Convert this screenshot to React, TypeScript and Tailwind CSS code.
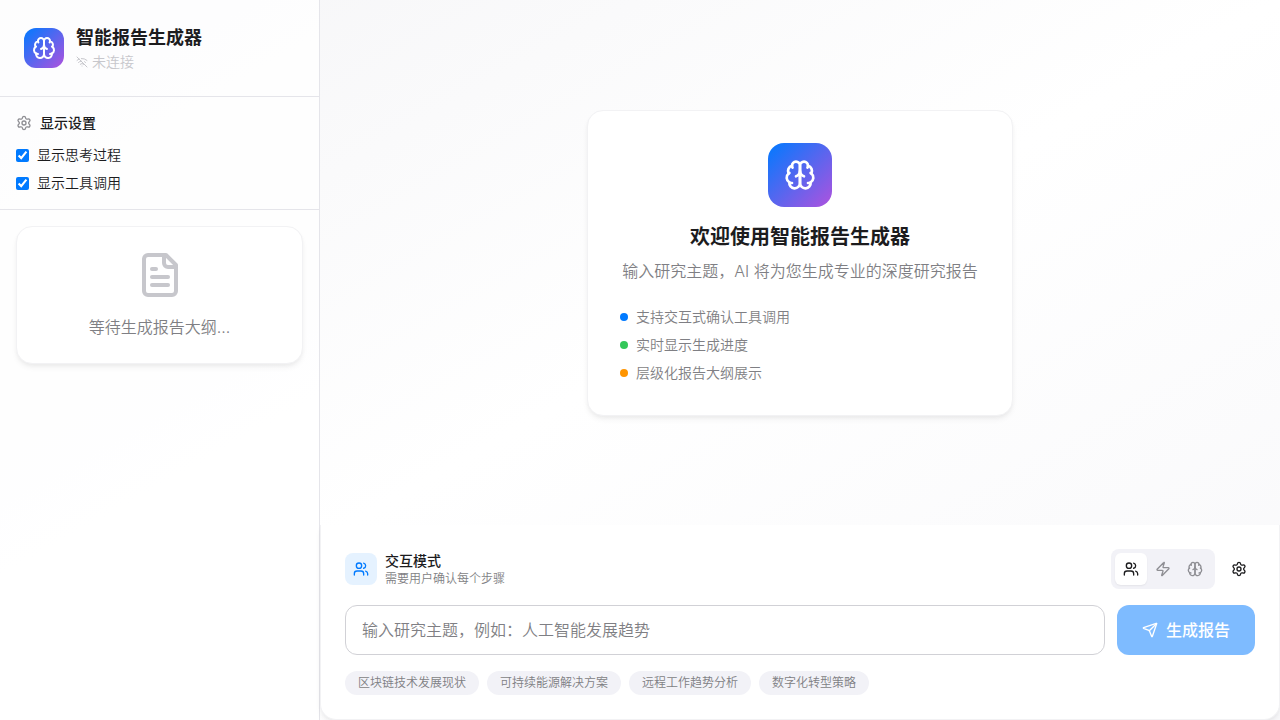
import { useState } from 'react';
import type { ReactNode } from 'react';
import { Send, Settings, Users, WifiOff, Zap } from 'lucide-react';

const features = [
  { dot: 'bg-[#007aff]', text: '支持交互式确认工具调用' },
  { dot: 'bg-[#34c759]', text: '实时显示生成进度' },
  { dot: 'bg-[#ff9500]', text: '层级化报告大纲展示' },
];

const examples = ['区块链技术发展现状', '可持续能源解决方案', '远程工作趋势分析', '数字化转型策略'];

type IconProps = { className?: string };

function Icon({ className, children }: IconProps & { children: ReactNode }) {
  return (
    <svg
      className={className}
      viewBox="0 0 24 24"
      fill="none"
      stroke="currentColor"
      strokeWidth="2"
      strokeLinecap="round"
      strokeLinejoin="round"
      aria-hidden="true"
    >
      {children}
    </svg>
  );
}

function Brain({ className }: IconProps) {
  return (
    <Icon className={className}>
      <path d="M12 5a3 3 0 1 0-5.997.125 4 4 0 0 0-2.526 5.77 4 4 0 0 0 .556 6.588A4 4 0 1 0 12 18Z" />
      <path d="M12 5a3 3 0 1 1 5.997.125 4 4 0 0 1 2.526 5.77 4 4 0 0 1-.556 6.588A4 4 0 1 1 12 18Z" />
      <path d="M15 13a4.5 4.5 0 0 1-3-4 4.5 4.5 0 0 1-3 4" />
      <path d="M17.599 6.5a3 3 0 0 0 .399-1.375" />
      <path d="M6.003 5.125A3 3 0 0 0 6.401 6.5" />
      <path d="M3.477 10.896a4 4 0 0 1 .585-.396" />
      <path d="M19.938 10.5a4 4 0 0 1 .585.396" />
      <path d="M6 18a4 4 0 0 1-1.967-.516" />
      <path d="M19.967 17.484A4 4 0 0 1 18 18" />
    </Icon>
  );
}

function FileText({ className }: IconProps) {
  return (
    <Icon className={className}>
      <path d="M15 2H6a2 2 0 0 0-2 2v16a2 2 0 0 0 2 2h12a2 2 0 0 0 2-2V7Z" />
      <path d="M14 2v4a2 2 0 0 0 2 2h4" />
      <path d="M10 9H8" />
      <path d="M16 13H8" />
      <path d="M16 17H8" />
    </Icon>
  );
}

const modes = [
  { id: 'interactive', label: '交互模式', ModeIcon: Users },
  { id: 'auto', label: '自动模式', ModeIcon: Zap },
  { id: 'smart', label: '智能模式', ModeIcon: Brain },
];

function Sidebar() {
  return (
    <aside className="flex w-80 shrink-0 flex-col border-r border-[#e5e5ea] bg-white/80">
      <header className="flex items-center gap-3 border-b border-[#e5e5ea] px-6 py-6">
        <div className="flex size-10 items-center justify-center rounded-xl bg-linear-to-br/srgb from-[#007aff] to-[#af52de]">
          <Brain className="size-6 text-white" />
        </div>
        <div className="flex flex-col">
          <h1 className="text-lg leading-7 font-semibold">智能报告生成器</h1>
          <p className="flex items-center gap-1 text-sm leading-5 text-[#c7c7cc]">
            <WifiOff className="size-3" />
            未连接
          </p>
        </div>
      </header>
      <section className="border-b border-[#e5e5ea] p-4">
        <h2 className="mb-3 flex items-center gap-2 text-sm font-medium">
          <Settings className="size-4 text-[#8e8e93]" />
          显示设置
        </h2>
        <div className="flex flex-col gap-2 text-sm">
          {['显示思考过程', '显示工具调用'].map((label) => (
            <label key={label} className="flex items-center gap-2">
              <input type="checkbox" defaultChecked className="size-[13px] accent-[#007aff]" />
              {label}
            </label>
          ))}
        </div>
      </section>
      <div className="p-4">
        <div className="flex flex-col items-center gap-4 rounded-2xl border border-[#f2f2f4] bg-white p-6 shadow-[0_4px_6px_-1px_rgba(0,0,0,0.06),0_2px_4px_-1px_rgba(0,0,0,0.04)]">
          <FileText className="size-12 text-[#c7c7cc]" />
          <p className="text-base text-[#7f7f84]">等待生成报告大纲...</p>
        </div>
      </div>
    </aside>
  );
}

function Welcome() {
  return (
    <section className="flex flex-1 items-center justify-center">
      <div className="w-[426px] max-w-full rounded-2xl border border-[#f2f2f4] bg-white p-8 shadow-[0_4px_6px_-1px_rgba(0,0,0,0.06),0_2px_4px_-1px_rgba(0,0,0,0.04)]">
        <div className="mx-auto mb-4 flex size-16 items-center justify-center rounded-2xl bg-linear-to-br/srgb from-[#007aff] to-[#af52de]">
          <Brain className="size-8 text-white" />
        </div>
        <h2 className="mb-2 text-center text-xl leading-7 font-semibold">欢迎使用智能报告生成器</h2>
        <p className="mb-6 text-center text-base text-[#7f7f84]">
          输入研究主题，AI 将为您生成专业的深度研究报告
        </p>
        <ul className="flex flex-col gap-2 text-sm text-[#7f7f84]">
          {features.map(({ dot, text }) => (
            <li key={text} className="flex items-center gap-2">
              <span className={`size-2 rounded-full ${dot}`} />
              {text}
            </li>
          ))}
        </ul>
      </div>
    </section>
  );
}

function Composer() {
  const [mode, setMode] = useState('interactive');
  const [topic, setTopic] = useState('');
  return (
    <section className="flex flex-col gap-4 rounded-b-2xl border-x border-b border-[#f2f2f4] bg-white p-6 shadow-[0_4px_6px_-1px_rgba(0,0,0,0.06),0_2px_4px_-1px_rgba(0,0,0,0.04)]">
      <div className="flex items-center justify-between">
        <div className="flex items-center gap-2">
          <div className="flex size-8 items-center justify-center rounded-lg bg-[#e5f2ff] text-[#007aff]">
            <Users className="size-4" />
          </div>
          <div>
            <h3 className="text-sm leading-5 font-medium">交互模式</h3>
            <p className="text-xs leading-4 text-[#7f7f84]">需要用户确认每个步骤</p>
          </div>
        </div>
        <div className="flex items-center gap-2">
          <div className="flex rounded-lg bg-[#f2f2f7] p-1">
            {modes.map(({ id, label, ModeIcon }) => (
              <button
                key={id}
                type="button"
                aria-label={label}
                onClick={() => setMode(id)}
                className={`flex size-8 items-center justify-center rounded-md ${
                  mode === id ? 'bg-white shadow-[0_1px_2px_rgba(0,0,0,0.06)]' : 'text-[#8e8e93]'
                }`}
              >
                <ModeIcon className="size-4" />
              </button>
            ))}
          </div>
          <button type="button" aria-label="设置" className="flex size-8 items-center justify-center rounded-lg">
            <Settings className="size-4" />
          </button>
        </div>
      </div>
      <form className="flex gap-3" onSubmit={(event) => event.preventDefault()}>
        <input
          type="text"
          aria-label="研究主题"
          value={topic}
          onChange={(event) => setTopic(event.target.value)}
          placeholder="输入研究主题，例如：人工智能发展趋势"
          className="h-[50px] min-w-0 flex-1 rounded-xl border border-[#d1d1d6] bg-white px-4 text-base placeholder:text-[#7f7f84]"
        />
        <button
          type="submit"
          disabled={!topic}
          className="flex items-center gap-2 rounded-xl bg-[#007aff] px-[25px] text-base font-medium text-white disabled:opacity-50"
        >
          <Send className="size-4" />
          生成报告
        </button>
      </form>
      <div className="flex flex-wrap gap-2">
        {examples.map((example) => (
          <button
            key={example}
            type="button"
            onClick={() => setTopic(example)}
            className="rounded-full bg-[#f2f2f7] px-[13px] py-1 text-xs leading-4 text-[#7f7f84]"
          >
            {example}
          </button>
        ))}
      </div>
    </section>
  );
}

export default function App() {
  return (
    <div className="flex min-h-screen bg-linear-to-br/srgb from-[#f5f5f7] via-white to-[#f8f8fa] font-['Inter','Noto_Sans_CJK_SC',sans-serif] font-[350] text-[#1c1c1e] antialiased">
      <Sidebar />
      <main className="flex min-w-0 flex-1 flex-col">
        <Welcome />
        <Composer />
      </main>
    </div>
  );
}
